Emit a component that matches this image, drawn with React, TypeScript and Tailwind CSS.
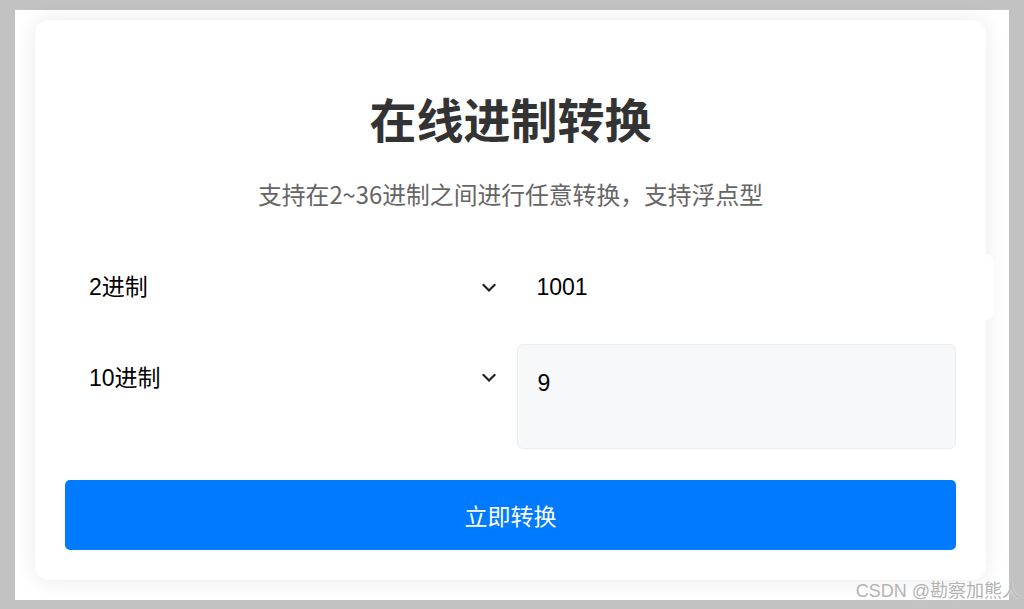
import React, { useState } from "react";

const bases = Array.from({ length: 35 }, (_, i) => i + 2);

const fieldFont = {
  fontFamily: '"Liberation Sans", "Noto Sans CJK SC", sans-serif',
};

interface SelectProps {
  value: number;
  onChange: (v: number) => void;
  className?: string;
}

const BaseSelect: React.FC<SelectProps> = ({ value, onChange, className }) => {
  return (
    <div className={"relative " + (className ?? "")}>
      <select
        value={value}
        onChange={(e) => onChange(Number(e.target.value))}
        className="w-full h-full appearance-none bg-white pl-6 pr-10 text-[23px] text-black outline-none font-['Liberation_Sans','Noto_Sans_CJK_SC',sans-serif]"
      >
        {bases.map((b) => (
          <option key={b} value={b}>
            {b}进制
          </option>
        ))}
      </select>
      <svg
        className="pointer-events-none absolute right-[9px] top-1/2 -translate-y-1/2"
        width="14"
        height="9"
        viewBox="0 0 14 9"
        fill="none"
      >
        <path
          d="M1.5 1.5 L7 7 L12.5 1.5"
          stroke="#222"
          strokeWidth="2.2"
          strokeLinecap="square"
        />
      </svg>
    </div>
  );
};

const App: React.FC = () => {
  const [fromBase, setFromBase] = useState(2);
  const [toBase, setToBase] = useState(10);
  const [input, setInput] = useState("1001");
  const [output, setOutput] = useState("9");

  const convert = () => {
    const n = parseInt(input, fromBase);
    setOutput(isNaN(n) ? "" : n.toString(toBase));
  };

  return (
    <div className="w-[1024px] h-[609px] bg-[#c2c2c2] pl-[15px] pt-[10px] pr-[15px] pb-[9px]">
      <div className="relative w-full h-full bg-white pl-[20px] pr-[23px] pt-[10px] pb-[20px]">
        <div className="w-full h-full bg-white rounded-[14px] shadow-[0_0_22px_rgba(0,0,0,0.09)] px-[30px] pt-[74px] pb-[30px] flex flex-col">
          <h1 className="text-center text-[47px] leading-[48px] font-bold text-[#333] font-['Noto_Sans_CJK_SC',sans-serif]">
            在线进制转换
          </h1>
          <p className="mt-[40px] text-center text-[23.8px] leading-[24px] text-[#666] font-['Noto_Sans_CJK_SC',sans-serif]">
            支持在2~36进制之间进行任意转换，支持浮点型
          </p>

          <div className="mt-[49px] grid grid-cols-2 gap-x-3">
            <BaseSelect
              value={fromBase}
              onChange={setFromBase}
              className="h-[65px]"
            />
            <input
              value={input}
              onChange={(e) => setInput(e.target.value)}
              style={fieldFont}
              className="w-[477px] h-[65px] bg-white rounded-[8px] pl-5 text-[23px] text-black outline-none"
            />
          </div>

          <div className="mt-[24px] grid grid-cols-2 gap-x-3">
            <BaseSelect
              value={toBase}
              onChange={setToBase}
              className="h-[68px]"
            />
            <textarea
              value={output}
              readOnly
              style={fieldFont}
              className="h-[105px] resize-none bg-[#f7f8fa] border border-[#ebedf0] rounded-[6px] pl-5 pt-[21px] text-[23px] text-black outline-none"
            />
          </div>

          <button
            onClick={convert}
            className="mt-[31px] h-[70px] shrink-0 w-full rounded-[5px] bg-[#007bff] text-white text-[23px] font-['Noto_Sans_CJK_SC',sans-serif]"
          >
            立即转换
          </button>
        </div>

        <div className="absolute right-[-11px] bottom-[0px] text-[18px] leading-none text-[#b4b4b4] [text-shadow:0_0_2px_#fff] font-['Liberation_Sans','Noto_Sans_CJK_SC',sans-serif]">
          CSDN @勘察加熊人
        </div>
      </div>
    </div>
  );
};

export default App;
